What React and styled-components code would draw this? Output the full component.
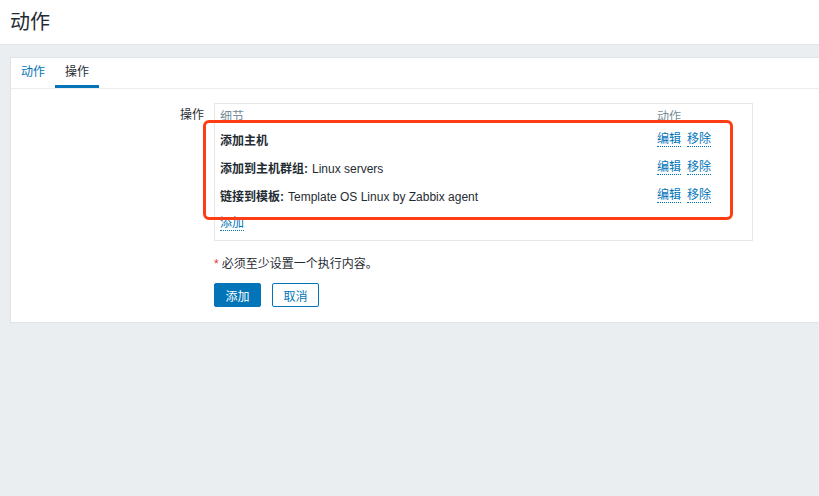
import styled, { createGlobalStyle } from "styled-components";

const GlobalStyle = createGlobalStyle`
  body {
    margin: 0;
    background: #ebeef0;
    overflow: hidden;
    font-family: "Liberation Sans", "Noto Sans CJK SC", sans-serif;
    font-size: 12px;
    color: #1f2c33;
  }
`;

const Header = styled.header`
  height: 44px;
  background: #fff;
  border-bottom: 1px solid #e4e7e9;
  padding-left: 10px;
`;

const Title = styled.h1`
  margin: 0;
  font-size: 20px;
  font-weight: normal;
  line-height: 44px;
`;

const Main = styled.main`
  padding: 12px 0 0 10px;
`;

const Panel = styled.section`
  background: #fff;
  border: 1px solid #dfe4e7;
  margin-right: -10px;
  padding-bottom: 15px;
`;

const Tabs = styled.nav`
  display: flex;
  height: 30px;
  border-bottom: 1px solid #ebeef0;
`;

const Tab = styled.a`
  padding: 2px 10px 0;
  line-height: 25px;
  font-size: 12px;
  color: ${(p) => (p.$active ? "#1f2c33" : "#0275b8")};
  border-bottom: 3px solid ${(p) => (p.$active ? "#0275b8" : "transparent")};
`;

const FormRow = styled.div`
  display: grid;
  grid-template-columns: 193px 539px;
  column-gap: 10px;
  margin-top: ${(p) => p.$top || 0}px;
`;

const Label = styled.div`
  text-align: right;
  padding-top: 5px;
  line-height: 14px;
`;

const Box = styled.div`
  position: relative;
  border: 1px solid #e5e8ea;
  padding: 5px 0 3px;
`;

const Grid = styled.div`
  display: grid;
  grid-template-columns: 1fr 100px;
`;

const HeadCell = styled.div`
  padding-left: 5px;
  height: 16px;
  line-height: 16px;
  color: #768d99;
`;

const Cell = styled.div`
  padding-left: 5px;
  height: 28px;
  display: flex;
  align-items: center;
  gap: 6px;
`;

const Strong = styled.b`
  font-weight: bold;
  margin-right: 4px;
`;

const Link = styled.a`
  color: #0275b8;
  line-height: 14px;
  border-bottom: 1px dotted #0275b8;
  cursor: pointer;
`;

const Highlight = styled.div`
  position: absolute;
  left: -12px;
  top: 16px;
  width: 524px;
  height: 94px;
  border: 3px solid #ff3d14;
  border-radius: 6px;
  pointer-events: none;
`;

const Note = styled.div`
  line-height: 14px;
`;

const Star = styled.span`
  color: #e33734;
  margin-right: 3px;
`;

const Buttons = styled.div`
  display: flex;
  gap: 11px;
`;

const Button = styled.button`
  height: 24px;
  width: 47px;
  padding: 0;
  font-family: inherit;
  font-size: 12px;
  border-radius: 2px;
  border: 1px solid #0275b8;
  background: ${(p) => (p.$primary ? "#0275b8" : "#fff")};
  color: ${(p) => (p.$primary ? "#fff" : "#0275b8")};
`;

const ops = [
  { label: "添加主机", value: "" },
  { label: "添加到主机群组:", value: "Linux servers" },
  { label: "链接到模板:", value: "Template OS Linux by Zabbix agent" },
];

export default function App() {
  return (
    <>
      <GlobalStyle />
      <Header>
        <Title>动作</Title>
      </Header>
      <Main>
        <Panel>
          <Tabs>
            <Tab>动作</Tab>
            <Tab $active>操作</Tab>
          </Tabs>
          <FormRow $top={14}>
            <Label>操作</Label>
            <Box>
              <Grid>
                <HeadCell>细节</HeadCell>
                <HeadCell>动作</HeadCell>
                {ops.map((op) => [
                  <Cell key={op.label}>
                    <span>
                      <Strong>{op.label}</Strong>
                      {op.value}
                    </span>
                  </Cell>,
                  <Cell key={op.label + "-a"}>
                    <Link>编辑</Link>
                    <Link>移除</Link>
                  </Cell>,
                ])}
                <Cell>
                  <Link>添加</Link>
                </Cell>
              </Grid>
              <Highlight />
            </Box>
          </FormRow>
          <FormRow $top={16}>
            <div />
            <Note>
              <Star>*</Star>必须至少设置一个执行内容。
            </Note>
          </FormRow>
          <FormRow $top={12}>
            <div />
            <Buttons>
              <Button $primary>添加</Button>
              <Button>取消</Button>
            </Buttons>
          </FormRow>
        </Panel>
      </Main>
    </>
  );
}
